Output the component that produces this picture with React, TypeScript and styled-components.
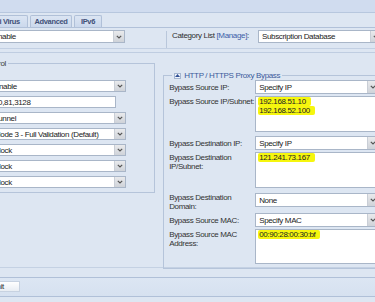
import styled, { createGlobalStyle } from 'styled-components'

const GlobalStyle = createGlobalStyle`
  body {
    margin: 0;
    background: #dde6f2;
    font-family: 'Liberation Sans', Arial, sans-serif;
    font-size: 8px;
    letter-spacing: -0.35px;
    color: #2e2e2e;
    overflow: hidden;
  }
`

const Page = styled.div`
  width: 460px;
  height: 302px;
  margin-left: -60px;
`

const TopBand = styled.div`
  height: 12px;
  background: #d0dcef;
  border-bottom: 1px solid #b7c7de;
`

const TabStrip = styled.div`
  display: flex;
  align-items: flex-end;
  gap: 2px;
  height: 14px;
  padding-left: 2px;
  border-bottom: 1px solid #b1c1d9;
`

const Tab = styled.div<{ $w: number }>`
  width: ${(p) => p.$w}px;
  height: 12px;
  box-sizing: border-box;
  background: linear-gradient(#dbe5f3, #cbd8ec);
  border: 1px solid #b0c0d8;
  border-bottom: none;
  border-radius: 2px 2px 0 0;
  font-weight: bold;
  font-size: 7.5px;
  color: #3f5078;
  line-height: 11px;
  text-align: center;
`

const TopRow = styled.div`
  display: flex;
  height: 20px;
  border-bottom: 1px solid #c3d0e3;
`

const LeftCell = styled.div`
  width: 226px;
  padding: 2px 0 0 49px;
  box-sizing: border-box;
`

const RightCell = styled.div`
  flex: 1;
  display: flex;
  align-items: flex-start;
  margin-top: 3px;
  padding: 0 0 0 5px;
  border-left: 1px solid #b9c7db;
  > span {
    width: 86px;
    line-height: 10px;
  }
  > div {
    margin-top: -1px;
  }
`

const Manage = styled.span`
  color: #3c5fa8;
`

const Divider = styled.div`
  margin-top: 3px;
  border-top: 1px solid #bfcde1;
`

const Main = styled.div`
  display: flex;
  align-items: flex-start;
  height: 214px;
  border-bottom: 1px solid #c4d1e3;
`

const Fieldset = styled.fieldset<{ $mt: number; $ml: number; $w: number; $pb: number }>`
  margin: ${(p) => p.$mt}px 0 0 ${(p) => p.$ml}px;
  width: ${(p) => p.$w}px;
  box-sizing: border-box;
  border: 1px solid #b5c4da;
  padding: 0 4px ${(p) => p.$pb}px 4px;
  min-width: 0;
`

const Legend = styled.legend<{ $blue?: boolean; $ml: number }>`
  padding: 0 2px;
  margin-left: ${(p) => p.$ml}px;
  line-height: 9px;
  color: ${(p) => (p.$blue ? '#3b5a9b' : '#3e3e3e')};
  display: flex;
  align-items: center;
  gap: 3px;
`

const Toggle = styled.span`
  width: 7px;
  height: 6px;
  box-sizing: border-box;
  border: 1px solid #a3b5d0;
  background: #eef3fa;
  display: inline-flex;
  align-items: center;
  justify-content: center;
`

const FieldStack = styled.div`
  display: flex;
  flex-direction: column;
  gap: 4px;
  padding: 12px 0 0 45px;
`

const Box = styled.div<{ $w: number; $h: number }>`
  width: ${(p) => p.$w}px;
  height: ${(p) => p.$h}px;
  box-sizing: border-box;
  background: #fff;
  border: 1px solid #a9b6c8;
  display: flex;
  align-items: center;
  color: #222;
  white-space: nowrap;
  overflow: hidden;
`

const BoxText = styled.span`
  flex: 1;
  padding-left: 3px;
`

const Arrow = styled.span`
  width: 10px;
  align-self: stretch;
  background: linear-gradient(#e9eaec, #cfd3d9);
  border-left: 1px solid #c9ced6;
  display: flex;
  align-items: center;
  justify-content: center;
`

const TextArea = styled.div<{ $h: number }>`
  width: 124px;
  height: ${(p) => p.$h}px;
  box-sizing: border-box;
  background: #fff;
  border: 1px solid #a9b6c8;
  padding: 0 0 0 3px;
  line-height: 9px;
  color: #222;
`

const Mark = styled.span`
  display: inline-block;
  background: #f6f60e;
  padding: 0 5px 0 1px;
  margin-left: -1px;
  border-radius: 2px;
`

const Grid = styled.div`
  display: flex;
  flex-direction: column;
  padding-left: 1px;
`

const FormRow = styled.div<{ $mt: number; $top?: boolean }>`
  display: flex;
  align-items: ${(p) => (p.$top ? 'flex-start' : 'center')};
  margin-top: ${(p) => p.$mt}px;
`

const Label = styled.div<{ $pt?: number }>`
  width: 86px;
  line-height: 9px;
  padding-top: ${(p) => p.$pt ?? 0}px;
  color: #333;
`

const Footer = styled.div`
  margin-top: 9px;
  padding: 3px 0 4px 32px;
  border-top: 1px solid #b0c0d8;
  border-bottom: 1px solid #b0c0d8;
  background: linear-gradient(#dce6f3, #d6e1f0);
`

const Button = styled.div`
  width: 48px;
  height: 11px;
  box-sizing: border-box;
  padding-right: 15px;
  text-align: right;
  line-height: 10px;
  background: linear-gradient(#ffffff, #e8edf3);
  border: 1px solid #c7d2e1;
  color: #333;
`

function Chevron() {
  return (
    <svg width="6" height="4" viewBox="0 0 6 4">
      <polyline points="0.8,0.8 3,3 5.2,0.8" fill="none" stroke="#555" strokeWidth="1.2" />
    </svg>
  )
}

function Select({ value, w, h }: { value: string; w: number; h: number }) {
  return (
    <Box $w={w} $h={h}>
      <BoxText>{value}</BoxText>
      <Arrow>
        <Chevron />
      </Arrow>
    </Box>
  )
}

const leftFields = [
  { value: 'Enable', select: true },
  { value: '80,81,3128', select: false },
  { value: 'Tunnel', select: true },
  { value: 'Mode 3 - Full Validation (Default)', select: true },
  { value: 'Block', select: true },
  { value: 'Block', select: true },
  { value: 'Block', select: true },
]

export default function App() {
  return (
    <Page>
      <GlobalStyle />
      <TopBand />
      <TabStrip>
        <Tab $w={36}>General</Tab>
        <Tab $w={48}>Anti Virus</Tab>
        <Tab $w={42}>Advanced</Tab>
        <Tab $w={28}>IPv6</Tab>
      </TabStrip>
      <TopRow>
        <LeftCell>
          <Select value="Enable" w={136} h={13} />
        </LeftCell>
        <RightCell>
          <span>
            Category List <Manage>[Manage]</Manage>:
          </span>
          <Select value="Subscription Database" w={124} h={13} />
        </RightCell>
      </TopRow>
      <Divider />
      <Main>
        <Fieldset $mt={6} $ml={0} $w={218} $pb={4}>
          <Legend $ml={-2}>Web Proxy Control</Legend>
          <FieldStack>
            {leftFields.map((f, i) =>
              f.select ? (
                <Select key={i} value={f.value} w={136} h={12} />
              ) : (
                <Box key={i} $w={126} $h={12}>
                  <BoxText>{f.value}</BoxText>
                </Box>
              )
            )}
          </FieldStack>
        </Fieldset>
        <Fieldset $mt={18} $ml={8} $w={240} $pb={4}>
          <Legend $blue $ml={4}>
            <Toggle>
              <svg width="5" height="3" viewBox="0 0 5 3">
                <polygon points="0,3 2.5,0 5,3" fill="#2f4f95" />
              </svg>
            </Toggle>
            HTTP / HTTPS Proxy Bypass
          </Legend>
          <Grid>
            <FormRow $mt={0}>
              <Label>Bypass Source IP:</Label>
              <Select value="Specify IP" w={124} h={14} />
            </FormRow>
            <FormRow $mt={2} $top>
              <Label $pt={1}>Bypass Source IP/Subnet:</Label>
              <TextArea $h={36}>
                <Mark>192.168.51.10</Mark>
                <br />
                <Mark>192.168.52.100</Mark>
              </TextArea>
            </FormRow>
            <FormRow $mt={4}>
              <Label>Bypass Destination IP:</Label>
              <Select value="Specify IP" w={124} h={14} />
            </FormRow>
            <FormRow $mt={2} $top>
              <Label $pt={1}>
                Bypass Destination
                <br />
                IP/Subnet:
              </Label>
              <TextArea $h={36}>
                <Mark>121.241.73.167</Mark>
              </TextArea>
            </FormRow>
            <FormRow $mt={5} $top>
              <Label>
                Bypass Destination
                <br />
                Domain:
              </Label>
              <Select value="None" w={124} h={14} />
            </FormRow>
            <FormRow $mt={2}>
              <Label>Bypass Source MAC:</Label>
              <Select value="Specify MAC" w={124} h={14} />
            </FormRow>
            <FormRow $mt={2} $top>
              <Label $pt={1}>
                Bypass Source MAC
                <br />
                Address:
              </Label>
              <TextArea $h={35}>
                <Mark>00:90:28:00:30:bf</Mark>
              </TextArea>
            </FormRow>
          </Grid>
        </Fieldset>
      </Main>
      <Footer>
        <Button>Submit</Button>
      </Footer>
    </Page>
  )
}
